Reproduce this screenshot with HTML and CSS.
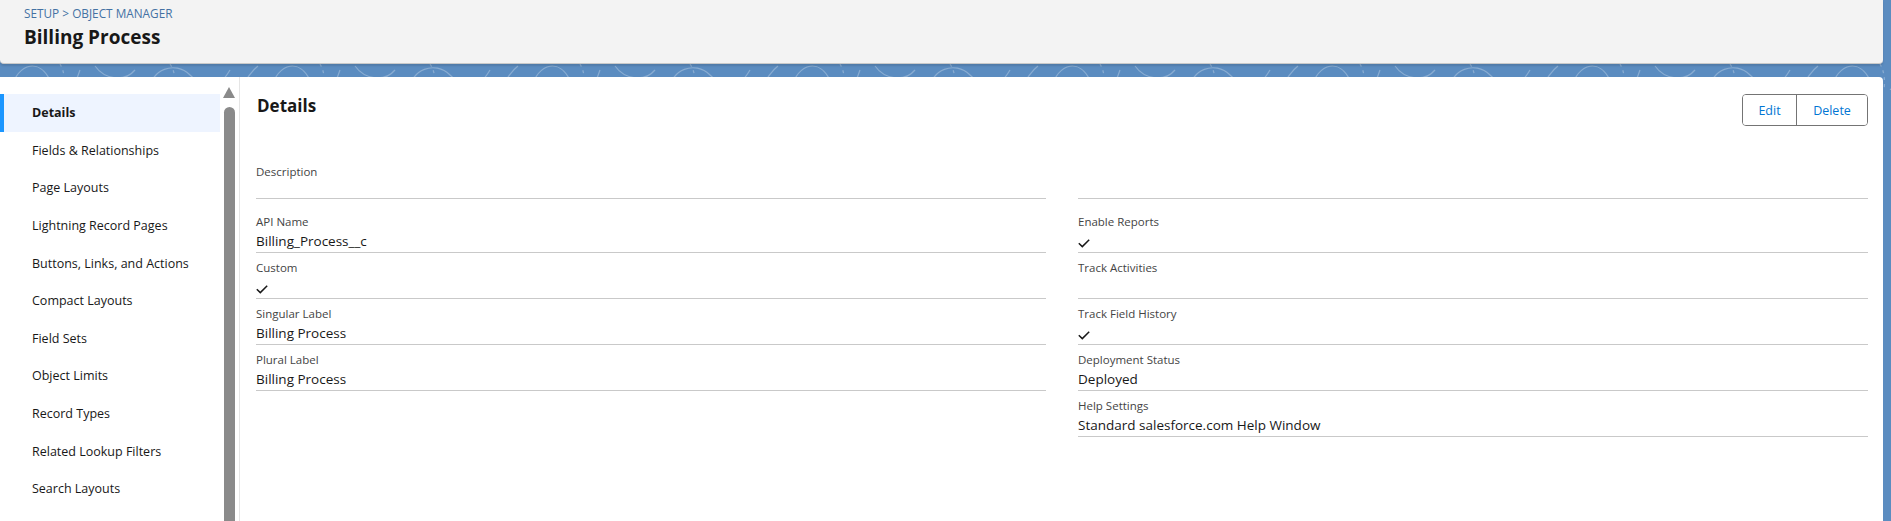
FILE: index.html
```html
<!DOCTYPE html>
<html lang="en">
<head>
<meta charset="utf-8">
<title>Billing Process | Object Manager</title>
<link rel="stylesheet" href="styles.css">
</head>
<body>
<div class="page">
  <header class="header">
    <div class="crumbs"><span class="crumb">SETUP</span> <span class="sep">&gt;</span> <span class="crumb">OBJECT MANAGER</span></div>
    <h1 class="title">Billing Process</h1>
  </header>
  <main class="card">
    <nav class="sidebar">
      <ul class="nav-list">
        <li class="nav-item active">Details</li>
        <li class="nav-item">Fields &amp; Relationships</li>
        <li class="nav-item">Page Layouts</li>
        <li class="nav-item">Lightning Record Pages</li>
        <li class="nav-item">Buttons, Links, and Actions</li>
        <li class="nav-item">Compact Layouts</li>
        <li class="nav-item">Field Sets</li>
        <li class="nav-item">Object Limits</li>
        <li class="nav-item">Record Types</li>
        <li class="nav-item">Related Lookup Filters</li>
        <li class="nav-item">Search Layouts</li>
      </ul>
    </nav>
    <div class="scrollbar">
      <div class="scroll-arrow"></div>
      <div class="scroll-thumb"></div>
    </div>
    <section class="content">
      <div class="content-head">
        <h2 class="section-title">Details</h2>
        <div class="btn-group">
          <button class="btn btn-edit">Edit</button>
          <button class="btn btn-delete">Delete</button>
        </div>
      </div>
      <div class="columns">
        <div class="column">
          <div class="field desc">
            <div class="label">Description</div>
            <div class="value empty"></div>
          </div>
          <div class="field first">
            <div class="label">API Name</div>
            <div class="value">Billing_Process__c</div>
          </div>
          <div class="field">
            <div class="label">Custom</div>
            <div class="value"><svg class="check" width="12" height="9" viewBox="0 0 12 9"><polyline points="0.8,4.2 4.3,7.6 11.2,0.8" fill="none" stroke="#181818" stroke-width="1.5"/></svg></div>
          </div>
          <div class="field">
            <div class="label">Singular Label</div>
            <div class="value">Billing Process</div>
          </div>
          <div class="field">
            <div class="label">Plural Label</div>
            <div class="value">Billing Process</div>
          </div>
        </div>
        <div class="column">
          <div class="field desc">
            <div class="label">&nbsp;</div>
            <div class="value empty"></div>
          </div>
          <div class="field first">
            <div class="label">Enable Reports</div>
            <div class="value"><svg class="check" width="12" height="9" viewBox="0 0 12 9"><polyline points="0.8,4.2 4.3,7.6 11.2,0.8" fill="none" stroke="#181818" stroke-width="1.5"/></svg></div>
          </div>
          <div class="field">
            <div class="label">Track Activities</div>
            <div class="value"></div>
          </div>
          <div class="field">
            <div class="label">Track Field History</div>
            <div class="value"><svg class="check" width="12" height="9" viewBox="0 0 12 9"><polyline points="0.8,4.2 4.3,7.6 11.2,0.8" fill="none" stroke="#181818" stroke-width="1.5"/></svg></div>
          </div>
          <div class="field">
            <div class="label">Deployment Status</div>
            <div class="value">Deployed</div>
          </div>
          <div class="field">
            <div class="label">Help Settings</div>
            <div class="value">Standard salesforce.com Help Window</div>
          </div>
        </div>
      </div>
    </section>
  </main>
</div>
</body>
</html>
```
FILE: styles.css
```css
* { box-sizing: border-box; }
html, body {
  margin: 0;
  height: 100%;
  overflow: hidden;
}
body {
  font-family: "Open Sans", "Noto Sans", Arial, sans-serif;
  color: #181818;
  background-color: #5b8cc0;
  background-image: url("data:image/svg+xml;utf8,<svg xmlns='http://www.w3.org/2000/svg' width='260' height='90' viewBox='0 0 260 90'><g fill='none' stroke='white' stroke-opacity='0.28' stroke-width='1.2'><path d='M10 90 C 20 60, 40 60, 50 80 S 70 100, 80 70'/><path d='M95 66 C 105 80, 125 82, 135 70'/><path d='M150 90 C 150 70, 175 60, 190 75 S 215 95, 230 70'/><path d='M240 90 Q 250 72, 258 66'/><path d='M60 64 q 6 10 4 26' stroke-dasharray='3 4'/><path d='M170 64 q 8 12 2 26' stroke-dasharray='3 4'/></g></svg>");
  background-repeat: repeat-x;
}
.page {
  display: flex;
  flex-direction: column;
  height: 100%;
}
.header {
  width: 1883px;
  height: 64px;
  background: #f3f3f3;
  border-radius: 0 0 4px 4px;
  box-shadow: 0 2px 2px rgba(0, 0, 0, 0.12);
  border-bottom: 1px solid #c9c9c9;
  padding: 4px 24px 0;
  flex: none;
}
.crumbs {
  font-size: 11.8px;
  line-height: 18px;
  color: #4471a3;
}
.sep { color: #4471a3; }
.title {
  margin: 0;
  font-size: 19px;
  line-height: 30px;
  font-weight: 700;
  color: #181818;
}
.card {
  margin-top: 13px;
  width: 1883px;
  flex: 1;
  background: #fff;
  border-radius: 0 4px 0 0;
  display: flex;
  min-height: 0;
}
.sidebar {
  width: 220px;
  flex: none;
  padding-top: 17px;
}
.nav-list {
  list-style: none;
  margin: 0;
  padding: 0;
}
.nav-item {
  height: 37.6px;
  display: flex;
  align-items: center;
  padding-left: 32px;
  font-size: 12.5px;
  color: #181818;
  white-space: nowrap;
}
.nav-item.active {
  background: #eef4ff;
  border-left: 4px solid #1b96ff;
  padding-left: 28px;
  font-weight: 700;
}
.scrollbar {
  width: 20px;
  flex: none;
  border-right: 1px solid #e5e5e5;
  display: flex;
  flex-direction: column;
  align-items: flex-start;
  padding-left: 3px;
  padding-top: 10px;
}
.scroll-arrow {
  width: 0;
  height: 0;
  border-left: 6.5px solid transparent;
  border-right: 6.5px solid transparent;
  border-bottom: 11px solid #8a8a8a;
}
.scroll-thumb {
  margin-top: 9px;
  margin-left: 1px;
  width: 11px;
  flex: 1;
  background: #8a8a8a;
  border-radius: 6px 6px 0 0;
}
.content {
  flex: 1;
  padding: 17px 15px 0 16px;
}
.content-head {
  display: flex;
  justify-content: space-between;
  align-items: flex-start;
  height: 32px;
}
.section-title {
  margin: 0;
  font-size: 17px;
  line-height: 24px;
  font-weight: 700;
  color: #181818;
  padding-left: 1px;
}
.btn-group {
  display: flex;
  height: 32px;
  border: 1px solid #747474;
  border-radius: 4px;
  overflow: hidden;
}
.btn {
  border: 0;
  background: #fff;
  font-family: inherit;
  font-size: 12.5px;
  color: #0176d3;
  padding: 0;
  height: 30px;
  cursor: pointer;
}
.btn-edit {
  width: 54px;
  border-right: 1px solid #747474;
}
.btn-delete {
  width: 70px;
}
.columns {
  display: grid;
  grid-template-columns: 1fr 1fr;
  column-gap: 32px;
}
.column {
  display: flex;
  flex-direction: column;
}
.field {
  border-bottom: 1px solid #c9c9c9;
  padding-top: 6px;
}
.field.desc {
  padding-top: 37px;
}
.field.desc .value.empty {
  height: 17px;
  min-height: 17px;
}
.field.first {
  margin-top: 8px;
}
.label {
  font-size: 11.5px;
  line-height: 18px;
  color: #444444;
}
.value {
  font-size: 13.5px;
  line-height: 21px;
  min-height: 21px;
  color: #181818;
  display: flex;
  align-items: center;
  white-space: nowrap;
}
.check {
  display: block;
  margin-top: 3px;
}
```
